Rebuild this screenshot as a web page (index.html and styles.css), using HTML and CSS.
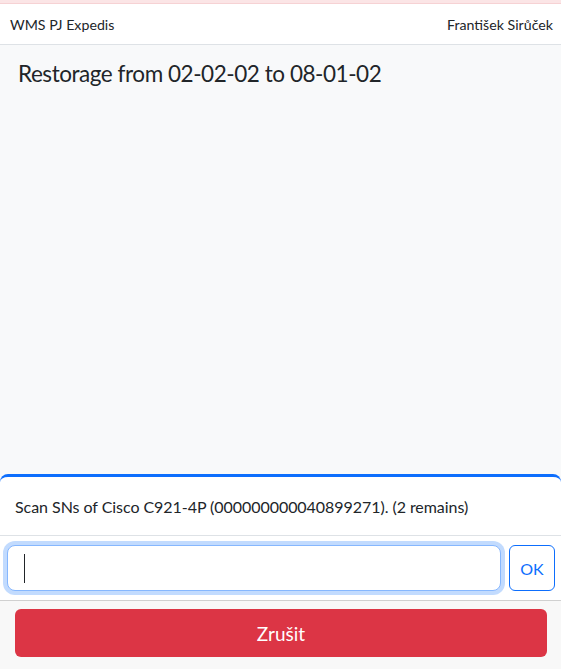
FILE: index.html
```html
<!DOCTYPE html>
<html lang="cs">
<head>
<meta charset="utf-8">
<title>WMS PJ Expedis</title>
<link rel="stylesheet" href="styles.css">
</head>
<body>
<div class="topline"></div>
<nav class="navbar">
  <span class="brand">WMS PJ Expedis</span>
  <span class="user">František Sirůček</span>
</nav>
<main class="content">
  <h1 class="title">Restorage from 02-02-02 to 08-01-02</h1>
</main>
<section class="panel">
  <div class="message">Scan SNs of Cisco C921-4P (000000000040899271). (2 remains)</div>
  <div class="input-row">
    <div class="input-wrap">
      <input class="scan-input" type="text" aria-label="SN">
      <span class="caret"></span>
    </div>
    <button class="btn-ok" type="button">OK</button>
  </div>
  <div class="footer">
    <button class="btn-cancel" type="button">Zrušit</button>
  </div>
</section>
</body>
</html>
```

FILE: styles.css
```css
* { box-sizing: border-box; }
html, body { height: 100%; }
body {
  margin: 0;
  display: flex;
  flex-direction: column;
  font-family: Lato, "Noto Sans", sans-serif;
  color: #212529;
  background: #f8f9fa;
}
.topline {
  height: 4px;
  background: #fbe5e6;
  border-bottom: 1px solid #f6d2d4;
}
.navbar {
  height: 41px;
  display: flex;
  align-items: center;
  justify-content: space-between;
  padding: 0 8px 0 10px;
  background: #fff;
  border-bottom: 1px solid #dee2e6;
  font-size: 14.2px;
}
.content {
  flex: 1;
  background: #f8f9fa;
  padding: 15px 18px;
}
.title {
  margin: 0;
  font-size: 22.5px;
  letter-spacing: -0.45px;
  font-weight: 400;
  line-height: 1.2;
}
.panel {
  background: #fff;
  border-top: 3px solid #0d6efd;
  border-radius: 8px 8px 0 0;
}
.message {
  height: 59px;
  display: flex;
  align-items: center;
  padding: 0 15px;
  font-size: 16px;
  letter-spacing: -0.05px;
  border-bottom: 1px solid #dee2e6;
}
.input-row {
  display: flex;
  align-items: center;
  gap: 8px;
  padding: 9px 6px 9px 7px;
  border-bottom: 1px solid #d0d0d0;
}
.input-wrap {
  position: relative;
  flex: 1;
}
.scan-input {
  display: block;
  width: 100%;
  height: 46px;
  border: 1px solid #86b7fe;
  border-radius: 8px;
  box-shadow: 0 0 0 4px rgba(13, 110, 253, 0.25);
  outline: none;
  font-size: 20px;
  padding: 0 16px;
  caret-color: transparent;
}
.caret {
  position: absolute;
  left: 17px;
  top: 9px;
  width: 1px;
  height: 29px;
  background: #212529;
}
.btn-ok {
  width: 46px;
  height: 46px;
  border: 1px solid #0d6efd;
  border-radius: 6px;
  background: #fff;
  color: #0d6efd;
  font-family: inherit;
  font-size: 16px;
  padding: 0;
}
.footer {
  background: #f8f8f8;
  padding: 8px 14px 12px 15px;
}
.btn-cancel {
  display: block;
  width: 100%;
  height: 48px;
  border: none;
  border-radius: 6px;
  background: #dc3545;
  color: #fff;
  font-family: inherit;
  font-size: 19px;
}
```
